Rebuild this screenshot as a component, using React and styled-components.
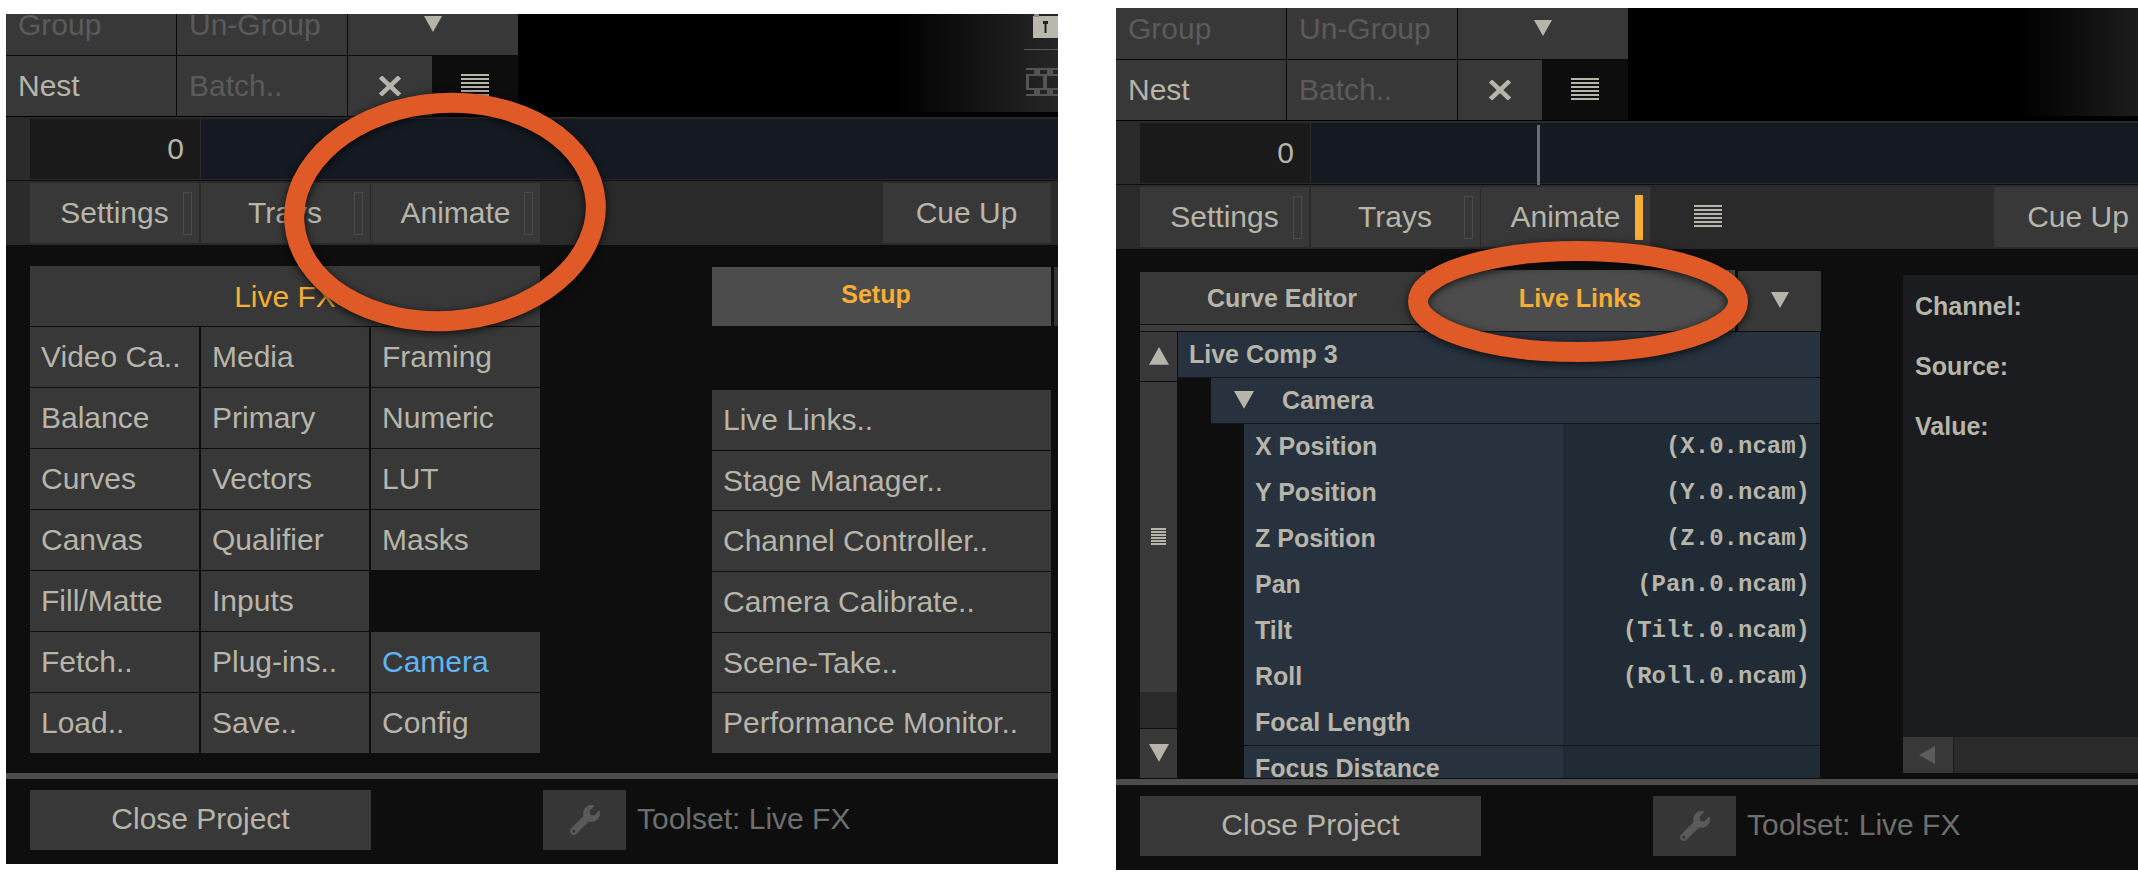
import React from "react";
import styled, { createGlobalStyle } from "styled-components";
import { FaWrench } from "react-icons/fa";

const TEXT = "#b7b5aa";
const CELL = "#383838";
const ORANGE = "#f6ae35";
const PANEL = "#0e0e0e";

const GlobalStyle = createGlobalStyle`
  html, body {
    margin: 0;
    background: #fff;
  }
  body {
    font-family: "Liberation Sans", Arial, sans-serif;
  }
`;

const Triangle = ({ dir = "down", size = 18, color = TEXT }) => {
  const points = {
    down: "0,0 18,0 9,16",
    up: "9,0 18,16 0,16",
    left: "16,0 16,18 0,9",
  };
  return (
    <svg width={size} height={size} viewBox="0 0 18 18" fill={color}>
      <polygon points={points[dir]} />
    </svg>
  );
};

const Lines = ({ width = 28, count = 6, pitch = 4, thick = 2 }) => (
  <svg width={width} height={count * pitch} fill={TEXT}>
    {Array.from({ length: count }).map((_, i) => (
      <rect key={i} x="0" y={i * pitch} width={width} height={thick} />
    ))}
  </svg>
);

const CloseMark = () => (
  <svg width="22" height="20" viewBox="0 0 22 20" stroke={TEXT} strokeWidth="4.5">
    <line x1="1.5" y1="1" x2="20.5" y2="19" />
    <line x1="20.5" y1="1" x2="1.5" y2="19" />
  </svg>
);

const LockBadge = () => (
  <svg width="25" height="24" viewBox="0 0 25 24">
    <rect x="0" y="2" width="25" height="22" fill="#bab8ad" />
    <rect x="1" y="0" width="5" height="3" fill="#8d8b83" />
    <rect x="10" y="7" width="5" height="3" fill="#222" />
    <rect x="11.5" y="9" width="2" height="10" fill="#222" />
  </svg>
);

const FilmStrip = () => (
  <svg width="32" height="28" viewBox="0 0 32 28" fill="#555">
    <rect x="0" y="0" width="32" height="2" />
    <rect x="8" y="2" width="6" height="4" />
    <rect x="21" y="2" width="6" height="4" />
    <rect x="0" y="6" width="32" height="2" />
    <rect x="0" y="8" width="3" height="12" />
    <rect x="17" y="8" width="4" height="12" />
    <rect x="0" y="20" width="32" height="2" />
    <rect x="8" y="22" width="6" height="4" />
    <rect x="21" y="22" width="6" height="4" />
    <rect x="0" y="26" width="32" height="2" />
  </svg>
);

const Ring = styled.svg`
  position: absolute;
  left: ${(p) => p.$left}px;
  top: ${(p) => p.$top}px;
  overflow: visible;
  filter: drop-shadow(0 2px 4px rgba(0, 0, 0, 0.75));
`;

const Callout = ({ cx, cy, rx, ry, tilt = 0 }) => (
  <Ring $left={cx - rx} $top={cy - ry} width={rx * 2} height={ry * 2}>
    <ellipse
      cx={rx}
      cy={ry}
      rx={rx}
      ry={ry}
      fill="none"
      stroke="#e05a27"
      strokeWidth="20"
      transform={`rotate(${tilt} ${rx} ${ry})`}
    />
  </Ring>
);

const Page = styled.div`
  display: flex;
  align-items: flex-start;
  width: 2138px;
  height: 880px;
  overflow: hidden;
`;

const Panel = styled.div`
  position: relative;
  flex: none;
  width: ${(p) => p.$width}px;
  margin-top: ${(p) => p.$top}px;
  margin-left: ${(p) => p.$left}px;
  background: ${PANEL};
  overflow: hidden;
`;

const Header = styled.div`
  display: flex;
  background: #000;
  padding-bottom: 1px;
`;

const HeaderGrid = styled.div`
  flex: none;
  display: grid;
  grid-template-columns: repeat(3, 170px);
  grid-template-rows: ${(p) => p.$first}px 60px;
  gap: 1px;
  background: #0a0a0a;
`;

const HeaderCell = styled.div`
  display: flex;
  align-items: flex-end;
  padding-left: 12px;
  background: ${CELL};
  overflow: hidden;
  font-size: 30px;
  color: ${(p) => (p.$dim ? "#5b5b5b" : TEXT)};
  span {
    line-height: 60px;
  }
`;

const HeaderIconCell = styled.div`
  display: flex;
  align-items: flex-end;
  justify-content: center;
  background: ${CELL};
  overflow: hidden;
  i {
    display: flex;
    align-items: center;
    justify-content: center;
    height: 60px;
  }
`;

const SplitCell = styled.div`
  display: grid;
  grid-template-columns: 84px 86px;
`;

const SplitPart = styled.div`
  display: flex;
  align-items: center;
  justify-content: center;
  background: ${(p) => (p.$dark ? "#0d0d0d" : CELL)};
`;

const Fade = styled.div`
  flex: 1;
  display: flex;
  flex-direction: column;
  align-items: flex-end;
  margin-bottom: 4px;
  background: linear-gradient(to right, #000 ${(p) => p.$from}px, #262626 ${(p) => p.$from + 164}px);
`;

const FadeRule = styled.div`
  width: 34px;
  height: 1px;
  margin: 11px 0 18px;
  background: #5a5a5a;
`;

const BarRow = styled.div`
  display: flex;
  height: 60px;
  padding: 2px 0 1px 24px;
  margin-bottom: 1px;
  background: #2a2a2a;
`;

const FrameField = styled.div`
  flex: none;
  width: 154px;
  padding-right: 16px;
  background: #1a1a1a;
  font-size: 30px;
  line-height: 60px;
  text-align: right;
  color: ${TEXT};
`;

const Timeline = styled.div`
  flex: 1;
  display: flex;
  margin-left: 1px;
  background: #151a22;
`;

const Playhead = styled.div`
  width: 3px;
  margin: 2px 0 -2px 226px;
  background: #6a6c70;
`;

const ToolRow = styled.div`
  display: flex;
  align-items: center;
  gap: 1.5px;
  height: 60px;
  padding: 2px 0 2px 24px;
  background: #2a2a2a;
`;

const ToolButton = styled.div`
  position: relative;
  flex: none;
  width: 169px;
  height: 60px;
  background: ${CELL};
  font-size: 30px;
  line-height: 60px;
  text-align: center;
  color: ${TEXT};
`;

const Mark = styled.span`
  position: absolute;
  top: ${(p) => (p.$on ? 8 : 9)}px;
  right: 7px;
  width: ${(p) => (p.$on ? 8 : 9)}px;
  height: ${(p) => (p.$on ? 45 : 43)}px;
  box-sizing: border-box;
  background: ${(p) => (p.$on ? ORANGE : "transparent")};
  border: 1px solid ${(p) => (p.$on ? ORANGE : "#4b4b4b")};
`;

const ToolMenu = styled.div`
  display: flex;
  margin-left: 42px;
`;

const CueButton = styled(ToolButton)`
  width: 168px;
  margin-left: ${(p) => p.$gap}px;
`;

const Content = styled.div`
  display: flex;
  height: ${(p) => p.$height}px;
`;

const LeftColumn = styled.div`
  flex: none;
  width: 510px;
  margin-left: 24px;
  padding-top: 21px;
`;

const BlockTitle = styled.div`
  height: 60px;
  margin-bottom: 1px;
  background: ${CELL};
  font-size: 30px;
  line-height: 62px;
  text-align: center;
  color: ${ORANGE};
`;

const ToolGrid = styled.div`
  display: grid;
  grid-template-columns: 169px 168px 169px;
  grid-auto-rows: 60px;
  gap: 1px 2px;
`;

const ToolCell = styled.div`
  padding-left: 11px;
  background: ${(p) => (p.$empty ? "transparent" : CELL)};
  font-size: 30px;
  line-height: 60px;
  color: ${(p) => (p.$blue ? "#60b4f5" : TEXT)};
`;

const SetupColumn = styled.div`
  flex: none;
  width: 346px;
  margin-left: 172px;
  padding-top: 22px;
`;

const SetupHead = styled.div`
  display: flex;
  gap: 3px;
  height: 59px;
  margin-bottom: 64px;
`;

const SetupTab = styled.div`
  flex: none;
  box-sizing: border-box;
  width: 339px;
  padding-right: 11px;
  background: #4c4c4c;
  font-size: 25px;
  font-weight: bold;
  line-height: 54px;
  text-align: center;
  color: ${ORANGE};
`;

const SetupStub = styled.div`
  flex: 1;
  background: #333;
`;

const SetupList = styled.div`
  display: grid;
  grid-auto-rows: 59.7px;
  gap: 1px;
  width: 339px;
`;

const SetupItem = styled.div`
  padding-left: 11px;
  background: ${CELL};
  font-size: 30px;
  line-height: 59px;
  color: ${TEXT};
`;

const AnimateColumn = styled.div`
  flex: none;
  width: 681px;
  margin-left: 24px;
  padding-top: 21px;
`;

const TabRow = styled.div`
  display: flex;
  height: 61px;
  margin-bottom: 1px;
`;

const Tab = styled.div`
  flex: none;
  box-sizing: border-box;
  font-size: 25px;
  font-weight: bold;
  text-align: center;
`;

const IdleTab = styled(Tab)`
  width: 284px;
  height: 59px;
  margin: 2px 1px 0 0;
  background: linear-gradient(#383838 0 52px, #0f0f0f 52px 53px, #3d3d3d 53px);
  line-height: 52px;
  color: ${TEXT};
`;

const ActiveTab = styled(Tab)`
  width: 310px;
  background: #4c4c4c;
  line-height: 56px;
  color: ${ORANGE};
`;

const TabDrop = styled.div`
  flex: none;
  display: flex;
  align-items: center;
  justify-content: center;
  width: 83px;
  height: 60px;
  margin: 1px 0 0 3px;
  background: ${CELL};
`;

const TreeFrame = styled.div`
  display: flex;
  height: 446px;
  overflow: hidden;
`;

const ScrollColumn = styled.div`
  flex: none;
  display: flex;
  flex-direction: column;
  width: 37px;
  margin-right: 1px;
`;

const ScrollButton = styled.div`
  flex: none;
  display: flex;
  align-items: center;
  justify-content: center;
  height: ${(p) => p.$height}px;
  margin-bottom: 1px;
  background: ${CELL};
`;

const ScrollThumb = styled.div`
  flex: none;
  display: flex;
  align-items: center;
  justify-content: center;
  height: 310px;
  background: #3a3a3a;
`;

const ScrollTrack = styled.div`
  flex: none;
  height: 36px;
  margin-bottom: 1px;
  background: #2a2a2a;
`;

const Tree = styled.div`
  width: 642px;
`;

const TreeRow = styled.div`
  display: flex;
  align-items: center;
  box-sizing: border-box;
  height: 46px;
  margin-left: ${(p) => p.$indent}px;
  background: #27323e;
  border-bottom: 1px solid #12171c;
  font-size: 25px;
  font-weight: bold;
  color: ${TEXT};
`;

const TreeLabel = styled.div`
  padding-left: ${(p) => p.$pad}px;
`;

const ChannelRow = styled.div`
  display: grid;
  grid-template-columns: 319px 1fr;
  box-sizing: border-box;
  height: 46px;
  margin-left: 66px;
  border-bottom: 1px solid #12171c;
  font-size: 25px;
  font-weight: bold;
  line-height: 44px;
  color: ${TEXT};
`;

const ChannelName = styled.div`
  padding-left: 11px;
  background: #27323e;
`;

const ChannelLink = styled.div`
  padding-right: 10px;
  background: #202b35;
  font-family: "Liberation Mono", monospace;
  font-size: 24px;
  line-height: 46px;
  text-align: right;
  white-space: nowrap;
`;

const FoldIcon = styled.div`
  display: flex;
  margin-left: 23px;
`;

const InfoColumn = styled.div`
  flex: none;
  display: flex;
  flex-direction: column;
  width: 235px;
  height: 498px;
  margin: 26px 0 0 82px;
  background: #1a1c1f;
`;

const InfoBody = styled.div`
  flex: 1;
  display: flex;
  flex-direction: column;
  gap: 25px;
  padding: 14px 12px;
  font-size: 25px;
  font-weight: bold;
  line-height: 35px;
  color: ${TEXT};
`;

const HScroll = styled.div`
  display: flex;
  height: 36px;
`;

const HScrollButton = styled.div`
  flex: none;
  display: flex;
  align-items: center;
  justify-content: center;
  width: 50px;
  margin-right: 1px;
  background: ${CELL};
`;

const HScrollTrack = styled.div`
  flex: 1;
  background: #2a2a2a;
`;

const Divider = styled.div`
  height: 6px;
  background: #4c4c4c;
`;

const Footer = styled.div`
  display: flex;
  align-items: flex-start;
  height: 74px;
  padding: 11px 0 0 24px;
`;

const CloseButton = styled.div`
  flex: none;
  width: 341px;
  height: 60px;
  background: ${CELL};
  font-size: 30px;
  line-height: 58px;
  text-align: center;
  color: ${TEXT};
`;

const WrenchBox = styled.div`
  flex: none;
  display: flex;
  align-items: center;
  justify-content: center;
  width: 83px;
  height: 60px;
  margin-left: 172px;
  background: #363636;
  color: #5a5a5a;
`;

const ToolsetLabel = styled.div`
  margin-left: 11px;
  font-size: 30px;
  line-height: 58px;
  color: #6e6e6e;
`;

const TopBar = ({ first, fadeFrom, children }) => (
  <Header>
    <HeaderGrid $first={first}>
      <HeaderCell $dim>
        <span>Group</span>
      </HeaderCell>
      <HeaderCell $dim>
        <span>Un-Group</span>
      </HeaderCell>
      <HeaderIconCell>
        <i>
          <Triangle />
        </i>
      </HeaderIconCell>
      <HeaderCell>
        <span>Nest</span>
      </HeaderCell>
      <HeaderCell $dim>
        <span>Batch..</span>
      </HeaderCell>
      <SplitCell>
        <SplitPart>
          <CloseMark />
        </SplitPart>
        <SplitPart $dark>
          <Lines />
        </SplitPart>
      </SplitCell>
    </HeaderGrid>
    <Fade $from={fadeFrom}>{children}</Fade>
  </Header>
);

const Footing = () => (
  <>
    <Divider />
    <Footer>
      <CloseButton>Close Project</CloseButton>
      <WrenchBox>
        <FaWrench size={30} />
      </WrenchBox>
      <ToolsetLabel>Toolset: Live FX</ToolsetLabel>
    </Footer>
  </>
);

const toolCells = [
  ["Video Ca..", "Media", "Framing"],
  ["Balance", "Primary", "Numeric"],
  ["Curves", "Vectors", "LUT"],
  ["Canvas", "Qualifier", "Masks"],
  ["Fill/Matte", "Inputs", ""],
  ["Fetch..", "Plug-ins..", "Camera"],
  ["Load..", "Save..", "Config"],
];

const setupItems = [
  "Live Links..",
  "Stage Manager..",
  "Channel Controller..",
  "Camera Calibrate..",
  "Scene-Take..",
  "Performance Monitor..",
];

const channels = [
  ["X Position", "(X.0.ncam)"],
  ["Y Position", "(Y.0.ncam)"],
  ["Z Position", "(Z.0.ncam)"],
  ["Pan", "(Pan.0.ncam)"],
  ["Tilt", "(Tilt.0.ncam)"],
  ["Roll", "(Roll.0.ncam)"],
  ["Focal Length", ""],
  ["Focus Distance", ""],
];

export default function App() {
  return (
    <Page>
      <GlobalStyle />

      <Panel $width={1052} $top={14} $left={6}>
        <TopBar first={41} fadeFrom={376}>
          <LockBadge />
          <FadeRule />
          <FilmStrip />
        </TopBar>
        <BarRow>
          <FrameField>0</FrameField>
          <Timeline />
        </BarRow>
        <ToolRow>
          <ToolButton>
            Settings
            <Mark />
          </ToolButton>
          <ToolButton>
            Trays
            <Mark />
          </ToolButton>
          <ToolButton>
            Animate
            <Mark />
          </ToolButton>
          <CueButton $gap={341}>Cue Up</CueButton>
        </ToolRow>
        <Content $height={528}>
          <LeftColumn>
            <BlockTitle>Live FX</BlockTitle>
            <ToolGrid>
              {toolCells.flat().map((label, i) => (
                <ToolCell key={i} $empty={!label} $blue={label === "Camera"}>
                  {label}
                </ToolCell>
              ))}
            </ToolGrid>
          </LeftColumn>
          <SetupColumn>
            <SetupHead>
              <SetupTab>Setup</SetupTab>
              <SetupStub />
            </SetupHead>
            <SetupList>
              {setupItems.map((label) => (
                <SetupItem key={label}>{label}</SetupItem>
              ))}
            </SetupList>
          </SetupColumn>
        </Content>
        <Footing />
        <Callout cx={439} cy={198} rx={151} ry={109} tilt={-4} />
      </Panel>

      <Panel $width={1022} $top={8} $left={58}>
        <TopBar first={51} fadeFrom={389} />
        <BarRow>
          <FrameField>0</FrameField>
          <Timeline>
            <Playhead />
          </Timeline>
        </BarRow>
        <ToolRow>
          <ToolButton>
            Settings
            <Mark />
          </ToolButton>
          <ToolButton>
            Trays
            <Mark />
          </ToolButton>
          <ToolButton>
            Animate
            <Mark $on />
          </ToolButton>
          <ToolMenu>
            <Lines />
          </ToolMenu>
          <CueButton $gap={271}>Cue Up</CueButton>
        </ToolRow>
        <Content $height={530}>
          <AnimateColumn>
            <TabRow>
              <IdleTab>Curve Editor</IdleTab>
              <ActiveTab>Live Links</ActiveTab>
              <TabDrop>
                <Triangle />
              </TabDrop>
            </TabRow>
            <TreeFrame>
              <ScrollColumn>
                <ScrollButton $height={49}>
                  <Triangle dir="up" size={20} />
                </ScrollButton>
                <ScrollThumb>
                  <Lines width={15} count={6} pitch={3} thick={2} />
                </ScrollThumb>
                <ScrollTrack />
                <ScrollButton $height={49}>
                  <Triangle size={20} />
                </ScrollButton>
              </ScrollColumn>
              <Tree>
                <TreeRow $indent={0}>
                  <TreeLabel $pad={11}>Live Comp 3</TreeLabel>
                </TreeRow>
                <TreeRow $indent={33}>
                  <FoldIcon>
                    <Triangle size={20} />
                  </FoldIcon>
                  <TreeLabel $pad={28}>Camera</TreeLabel>
                </TreeRow>
                {channels.map(([name, link]) => (
                  <ChannelRow key={name}>
                    <ChannelName>{name}</ChannelName>
                    <ChannelLink>{link}</ChannelLink>
                  </ChannelRow>
                ))}
              </Tree>
            </TreeFrame>
          </AnimateColumn>
          <InfoColumn>
            <InfoBody>
              <div>Channel:</div>
              <div>Source:</div>
              <div>Value:</div>
            </InfoBody>
            <HScroll>
              <HScrollButton>
                <Triangle dir="left" size={18} color="#5c5c5c" />
              </HScrollButton>
              <HScrollTrack />
            </HScroll>
          </InfoColumn>
        </Content>
        <Footing />
        <Callout cx={462} cy={293.5} rx={160} ry={50.5} />
      </Panel>
    </Page>
  );
}
